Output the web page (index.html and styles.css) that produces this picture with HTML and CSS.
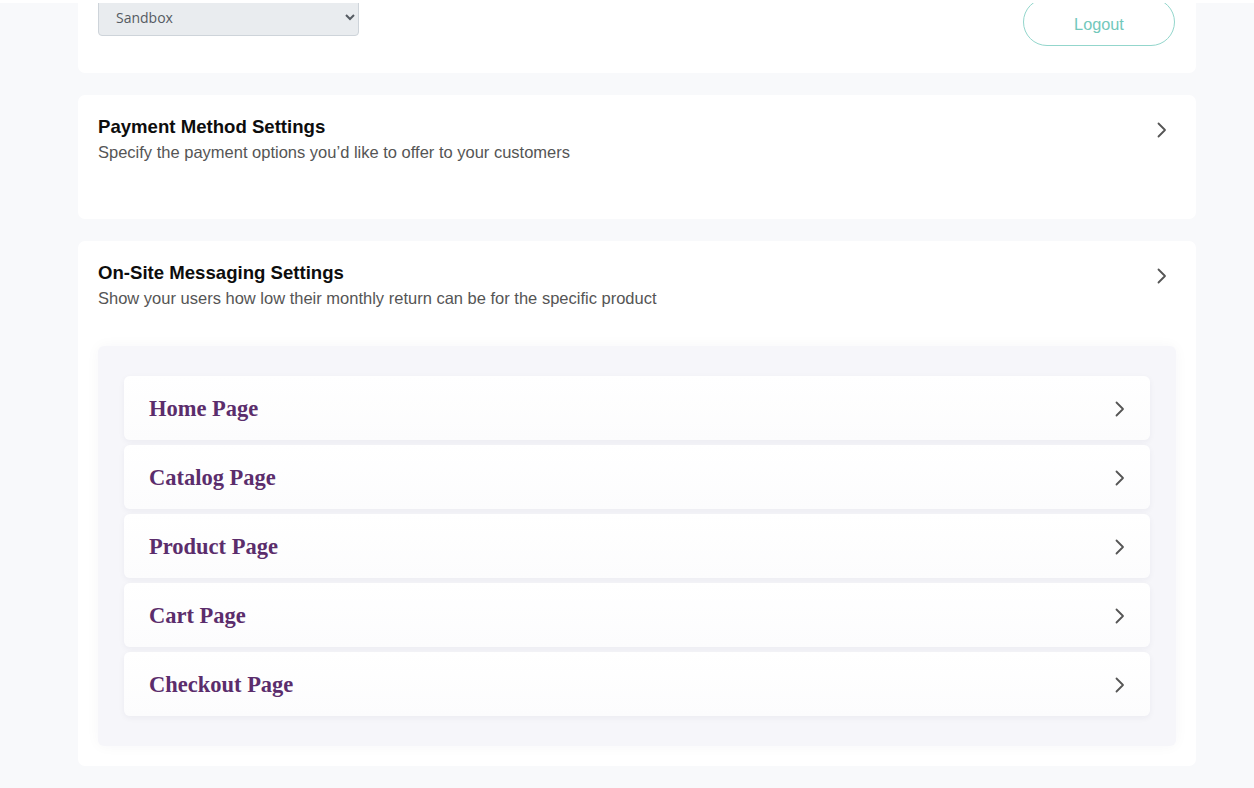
FILE: index.html
```html
<!DOCTYPE html>
<html lang="en">
<head>
<meta charset="utf-8">
<title>Settings</title>
<link rel="stylesheet" href="styles.css">
</head>
<body>
<div class="topstrip"></div>
<main class="page">
  <section class="card card-top">
    <div class="select-wrap">
      <select class="env-select">
        <option>Sandbox</option>
        <option>Production</option>
      </select>
    </div>
    <button class="logout">Logout</button>
  </section>

  <section class="card card-pm">
    <div class="card-head">
      <div>
        <h2 class="card-title">Payment Method Settings</h2>
        <p class="card-sub">Specify the payment options you’d like to offer to your customers</p>
      </div>
      <svg class="chev" width="10" height="16" viewBox="0 0 10 16"><polyline points="1.5,1.5 8,8 1.5,14.5" fill="none" stroke="#555" stroke-width="1.8" stroke-linecap="round" stroke-linejoin="round"/></svg>
    </div>
  </section>

  <section class="card card-osm">
    <div class="card-head">
      <div>
        <h2 class="card-title">On-Site Messaging Settings</h2>
        <p class="card-sub">Show your users how low their monthly return can be for the specific product</p>
      </div>
      <svg class="chev" width="10" height="16" viewBox="0 0 10 16"><polyline points="1.5,1.5 8,8 1.5,14.5" fill="none" stroke="#555" stroke-width="1.8" stroke-linecap="round" stroke-linejoin="round"/></svg>
    </div>
    <div class="panel">
      <div class="item"><span class="item-label">Home Page</span><svg class="chev" width="10" height="16" viewBox="0 0 10 16"><polyline points="1.5,1.5 8,8 1.5,14.5" fill="none" stroke="#555" stroke-width="1.8" stroke-linecap="round" stroke-linejoin="round"/></svg></div>
      <div class="item"><span class="item-label">Catalog Page</span><svg class="chev" width="10" height="16" viewBox="0 0 10 16"><polyline points="1.5,1.5 8,8 1.5,14.5" fill="none" stroke="#555" stroke-width="1.8" stroke-linecap="round" stroke-linejoin="round"/></svg></div>
      <div class="item"><span class="item-label">Product Page</span><svg class="chev" width="10" height="16" viewBox="0 0 10 16"><polyline points="1.5,1.5 8,8 1.5,14.5" fill="none" stroke="#555" stroke-width="1.8" stroke-linecap="round" stroke-linejoin="round"/></svg></div>
      <div class="item"><span class="item-label">Cart Page</span><svg class="chev" width="10" height="16" viewBox="0 0 10 16"><polyline points="1.5,1.5 8,8 1.5,14.5" fill="none" stroke="#555" stroke-width="1.8" stroke-linecap="round" stroke-linejoin="round"/></svg></div>
      <div class="item"><span class="item-label">Checkout Page</span><svg class="chev" width="10" height="16" viewBox="0 0 10 16"><polyline points="1.5,1.5 8,8 1.5,14.5" fill="none" stroke="#555" stroke-width="1.8" stroke-linecap="round" stroke-linejoin="round"/></svg></div>
    </div>
  </section>
</main>
</body>
</html>
```

FILE: styles.css
```css
* { box-sizing: border-box; }
html, body { margin: 0; padding: 0; }
body {
  background: #f8f9fb;
  font-family: "Liberation Sans", Arial, sans-serif;
  color: #111;
}
.topstrip {
  position: fixed;
  top: 0; left: 0; right: 0;
  height: 3px;
  background: #fff;
  z-index: 5;
}
.page {
  margin-top: -22px;
  padding-left: 78px;
  width: 1196px;
  display: flex;
  flex-direction: column;
  gap: 22px;
}
.card {
  background: #fff;
  border-radius: 7px;
  padding: 20px;
}
.card-top {
  display: flex;
  justify-content: space-between;
  align-items: flex-start;
  padding: 20px 21px 27px 20px;
}
.env-select {
  width: 261px;
  height: 38px;
  background: #e9ecef;
  border: 1px solid #ced4da;
  border-radius: 4px;
  font-family: "Open Sans", sans-serif;
  font-size: 14px;
  color: #555b62;
  padding: 0 12px 0 13px;
}
.logout {
  margin-top: 0;
  width: 152px;
  height: 48px;
  padding-top: 6px;
  background: #fff;
  border: 1.5px solid #93d6cc;
  border-radius: 24px;
  color: #72c8bb;
  font-family: "Liberation Sans", Arial, sans-serif;
  font-size: 16.3px;
}
.card-head {
  display: flex;
  justify-content: space-between;
  align-items: flex-start;
}
.card-head .chev { margin-top: 7px; margin-right: 9px; }
.card-title {
  margin: 2px 0 0;
  font-size: 18.6px;
  font-weight: bold;
  line-height: 20px;
  color: #0d0d0d;
}
.card-sub {
  margin: 6px 0 0;
  font-size: 16.5px;
  line-height: 19px;
  color: #555;
}
.card-pm { height: 124px; }
.card-osm { padding-bottom: 20px; }
.panel {
  margin-top: 38px;
  background: #f6f6fa;
  border-radius: 6px;
  box-shadow: 0 0 14px rgba(30, 30, 80, 0.04);
  padding: 30px 26px 30px 26px;
  display: flex;
  flex-direction: column;
  gap: 5px;
}
.item {
  height: 64px;
  background: linear-gradient(#ffffff, #fcfcfd);
  border-radius: 6px;
  box-shadow: 0 2px 6px rgba(40, 40, 80, 0.05);
  display: flex;
  align-items: center;
  justify-content: space-between;
  padding: 2px 25px 0 25px;
}
.item-label {
  font-family: "Liberation Serif", "Times New Roman", serif;
  font-weight: bold;
  font-size: 22.5px;
  color: #5b2d6c;
}
```
